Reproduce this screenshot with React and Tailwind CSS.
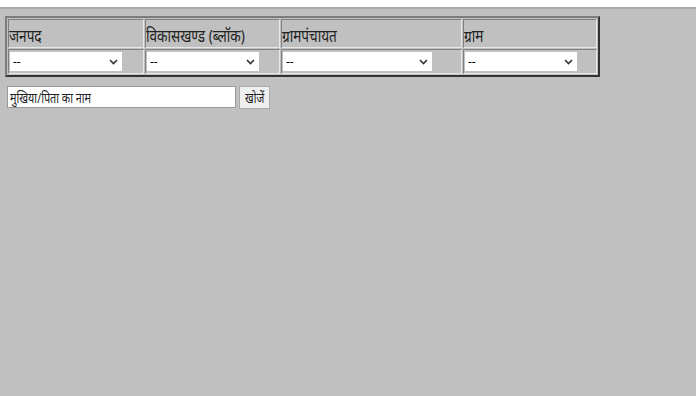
export default function App() {
  const heads = [
    ["जनपद", "w-[136px]", "w-[112px]"],
    ["विकासखण्ड (ब्लॉक)", "w-[135px]", "w-[112px]"],
    ["ग्रामपंचायत", "w-[181px]", "w-[149px]"],
    ["ग्राम", "w-[134px]", "w-[112px]"],
  ];
  const cell =
    "border border-t-[#808080] border-l-[#808080] border-b-[#e8e8e8] border-r-[#e8e8e8] p-0 align-top";
  return (
    <div className="w-[696px] h-[396px] bg-[#c0c0c0] overflow-hidden font-['Noto_Sans',sans-serif]">
      <div className="h-[7px] bg-white" />
      <div className="h-[2px] bg-[#a8a8a8]" />
      <div className="pt-[7px] pl-[5px]">
        <table className="border-separate border-spacing-[1px] border-[2px] border-t-[#7c7c7c] border-l-[#7c7c7c] border-b-[#333333] border-r-[#333333] w-[595px]">
          <tbody>
            <tr className="h-[28px]">
              {heads.map(([t, w]) => (
                <td key={t} className={`${cell} ${w} text-[17px] leading-[23px] text-[#222] pt-[4px] whitespace-nowrap`}>
                  <span className="inline-block origin-left scale-x-[0.8]">{t}</span>
                </td>
              ))}
            </tr>
            <tr className="h-[25px]">
              {heads.map(([t, w, sw]) => (
                <td key={t} className={`${cell} pt-[2px] pl-[1px]`}>
                  <div className={`${sw} h-[19px] bg-white flex items-center justify-between pl-[3px] pr-[4px] text-[12px] text-black`}>
                    <span className="leading-none">--</span>
                    <svg width="9" height="6" viewBox="0 0 9 6">
                      <path d="M1 1 L4.5 4.5 L8 1" fill="none" stroke="#333" strokeWidth="1.6" />
                    </svg>
                  </div>
                </td>
              ))}
            </tr>
          </tbody>
        </table>
      </div>
      <div className="flex items-start gap-[3px] pl-[7px] pt-[9px]">
        <div className="w-[229px] h-[22px] bg-white border border-[#999] flex items-center pl-[2px] text-[15px] text-[#222] whitespace-nowrap">
          <span className="inline-block origin-left scale-x-[0.72]">मुखिया/पिता का नाम</span>
        </div>
        <div className="w-[31px] h-[23px] bg-[#efefef] border border-[#aaa] flex items-center justify-center text-[15px] text-[#222] whitespace-nowrap">
          <span className="inline-block scale-x-[0.7]">खोजें</span>
        </div>
      </div>
    </div>
  );
}
